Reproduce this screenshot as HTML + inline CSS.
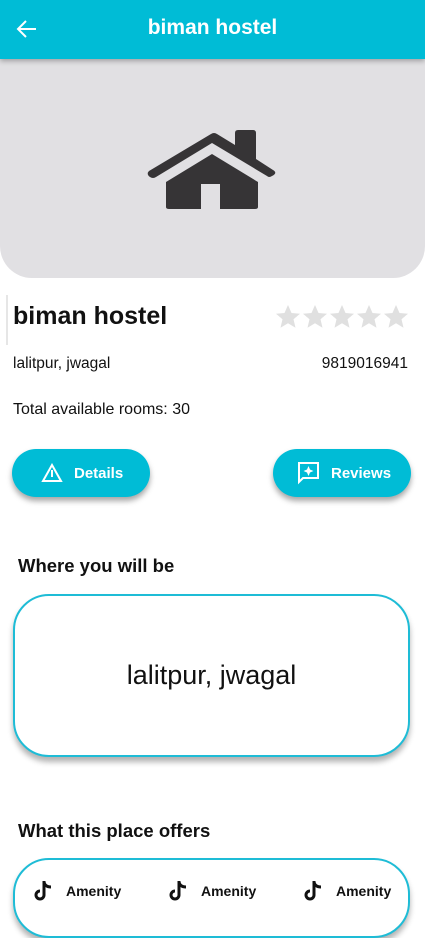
<!DOCTYPE html>
<html><head><meta charset="utf-8"><style>
*{margin:0;padding:0;box-sizing:border-box}
body{width:425px;height:912px;overflow:hidden;background:#fff;font-family:"Liberation Sans",Roboto,sans-serif;position:relative;color:#111}
.bar{position:absolute;left:0;top:0;width:425px;height:59px;background:#00bcd6;box-shadow:0 2px 5px rgba(0,0,0,.3);z-index:2}
.bar .t{position:absolute;left:0;right:0;top:16px;text-align:center;color:#fff;font-size:21px;font-weight:bold}
.img{position:absolute;left:0;top:59px;width:425px;height:219px;background:#e1e0e3;border-radius:0 0 32px 32px}
.a{position:absolute;white-space:nowrap}
.btn{position:absolute;top:449px;height:48px;width:138px;border-radius:24px;background:#00bcd6;box-shadow:0 4px 6px rgba(0,0,0,.35);color:#fff;font-weight:bold;font-size:15px}
.card{position:absolute;left:13px;width:397px;border:2px solid #1ebcd6;border-radius:36px;background:#fff;box-shadow:0 5px 6px rgba(0,0,0,.3)}
.am{position:absolute;top:880px;font-size:14px;font-weight:bold;display:flex;align-items:center;gap:13px}
</style></head><body>
<div class="bar">
<svg style="position:absolute;left:15px;top:17px" width="24" height="24" viewBox="0 0 24 24"><path d="M21 12H4M11 4l-8 8 8 8" stroke="#fff" stroke-width="2" fill="none"/></svg>
<div class="t">biman hostel</div></div>
<div class="img">
<svg style="position:absolute;left:147px;top:70px" width="130" height="81" viewBox="0 0 130 81">
<path d="M2 42 L64 5 Q67 3 70 5 L88 16 L88 4 Q88 1 91 1 L106 1 Q109 1 109 4 L109 30 L126 41 Q131 44 125 47 Q122 49 120 47 L65 14 L9 48 Q6 50 3 48 Q-1 45 2 42Z" fill="#363436"/>
<path d="M19 53 L65 25 L111 53 L111 78 Q111 80 108 80 L73 80 L73 55 L54 55 L54 80 L22 80 Q19 80 19 78Z" fill="#363436"/>
</svg></div>
<div class="a" style="left:6px;top:295px;width:2px;height:50px;background:#e6e6e6"></div>
<div class="a" style="left:13px;top:302px;font-size:25px;font-weight:bold">biman hostel</div>
<svg class="a" style="left:275px;top:304px" width="135" height="26" viewBox="0 0 135 26">
<defs><path id="s" d="M13 1l3.5 8 8.5.7-6.5 5.6 2 8.4L13 19.2 5.5 23.7l2-8.4L1 9.7l8.5-.7z" fill="#e0e0e0"/></defs>
<use href="#s" x="0"/><use href="#s" x="27"/><use href="#s" x="54"/><use href="#s" x="81"/><use href="#s" x="108"/></svg>
<div class="a" style="left:13px;top:355px;font-size:15.5px">lalitpur, jwagal</div>
<div class="a" style="right:17px;top:355px;font-size:15.5px">9819016941</div>
<div class="a" style="left:13px;top:401px;font-size:16px">Total available rooms: 30</div>
<div class="btn" style="left:12px">
<svg style="position:absolute;left:29px;top:14px" width="22" height="20" viewBox="0 0 22 20"><path d="M11 2 L20 18 L2 18Z M11 7V14" stroke="#fff" stroke-width="2" fill="none"/></svg>
<span class="a" style="left:62px;top:16px">Details</span></div>
<div class="btn" style="left:273px">
<svg style="position:absolute;left:24px;top:12px" width="24" height="24" viewBox="0 0 24 24"><path d="M2 2H21V17H6L2 21Z" stroke="#fff" stroke-width="2" fill="none"/><path d="M11.5 5L13 8.5 16.5 10 13 11.5 11.5 15 10 11.5 6.5 10 10 8.5Z" fill="#fff"/></svg>
<span class="a" style="left:58px;top:16px">Reviews</span></div>
<div class="a" style="left:18px;top:555px;font-size:18.5px;font-weight:bold">Where you will be</div>
<div class="card" style="top:594px;height:163px"><div style="position:absolute;left:0;right:0;top:64px;text-align:center;font-size:27px">lalitpur, jwagal</div></div>
<div class="a" style="left:18px;top:820px;font-size:18.5px;font-weight:bold">What this place offers</div>
<div class="card" style="top:858px;height:80px"></div>
<div class="am" style="left:34px"><svg width="19" height="22" viewBox="0 0 19 22"><path d="M10 1v14a4 4 0 1 1-4-4" stroke="#111" stroke-width="3" fill="none"/><path d="M10 2q1 5 7 5" stroke="#111" stroke-width="3" fill="none"/></svg>Amenity</div>
<div class="am" style="left:169px"><svg width="19" height="22" viewBox="0 0 19 22"><path d="M10 1v14a4 4 0 1 1-4-4" stroke="#111" stroke-width="3" fill="none"/><path d="M10 2q1 5 7 5" stroke="#111" stroke-width="3" fill="none"/></svg>Amenity</div>
<div class="am" style="left:304px"><svg width="19" height="22" viewBox="0 0 19 22"><path d="M10 1v14a4 4 0 1 1-4-4" stroke="#111" stroke-width="3" fill="none"/><path d="M10 2q1 5 7 5" stroke="#111" stroke-width="3" fill="none"/></svg>Amenity</div>
</body></html>
